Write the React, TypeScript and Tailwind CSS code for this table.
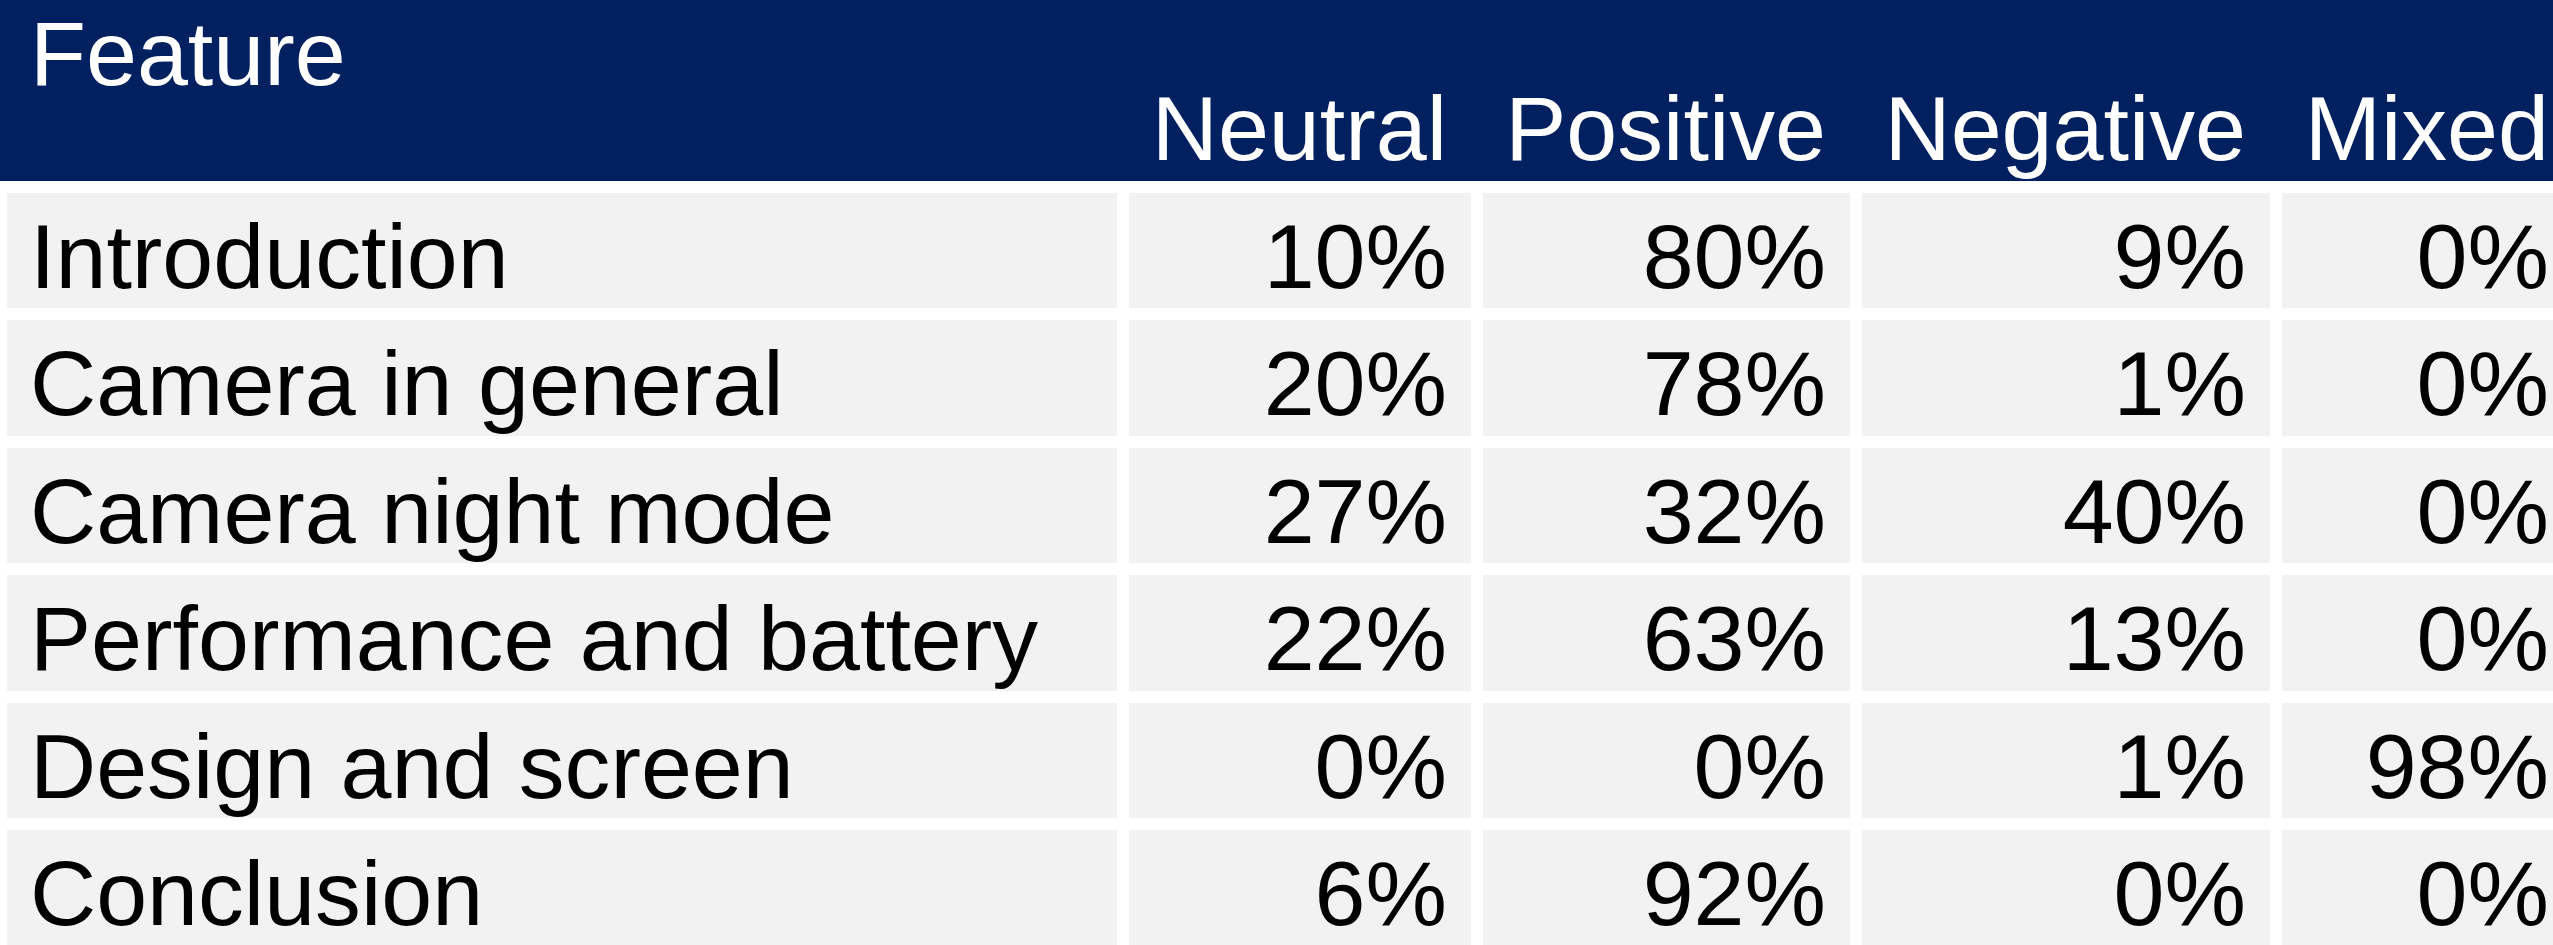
const columns = ['Neutral', 'Positive', 'Negative', 'Mixed'];

const rows: { feature: string; values: string[] }[] = [
  { feature: 'Introduction', values: ['10%', '80%', '9%', '0%'] },
  { feature: 'Camera in general', values: ['20%', '78%', '1%', '0%'] },
  { feature: 'Camera night mode', values: ['27%', '32%', '40%', '0%'] },
  { feature: 'Performance and battery', values: ['22%', '63%', '13%', '0%'] },
  { feature: 'Design and screen', values: ['0%', '0%', '1%', '98%'] },
  { feature: 'Conclusion', values: ['6%', '92%', '0%', '0%'] },
];

// column widths taken from the slide: feature | neutral | positive | negative | mixed
const grid = 'grid grid-cols-[1110px_342px_367px_408px_291px] gap-x-[12px]';

export default function App() {
  return (
    <div className="h-[945px] w-[2553px] overflow-hidden bg-white font-['Liberation_Sans',Arial,sans-serif] text-[91.6px] leading-[92px]">
      <div className="h-[181px] w-[2600px] bg-[#002060] pl-[7px] text-white">
        <div className={grid}>
          <div className="whitespace-nowrap pl-[23px] pt-[7px]">Feature</div>
          {columns.map((c) => (
            <div key={c} className="whitespace-nowrap pr-[24px] pt-[82px] text-right">
              {c}
            </div>
          ))}
        </div>
      </div>

      <div className={`${grid} mt-[12px] gap-y-[12px] pl-[7px] text-black`}>
        {rows.map((r) => (
          <div key={r.feature} className="contents">
            <div className="h-[115.4px] whitespace-nowrap bg-[#f2f2f2] pl-[23px] pt-[17px]">{r.feature}</div>
            {r.values.map((v, i) => (
              <div key={i} className="h-[115.4px] whitespace-nowrap bg-[#f2f2f2] pr-[24px] pt-[17px] text-right">
                {v}
              </div>
            ))}
          </div>
        ))}
      </div>
    </div>
  );
}
